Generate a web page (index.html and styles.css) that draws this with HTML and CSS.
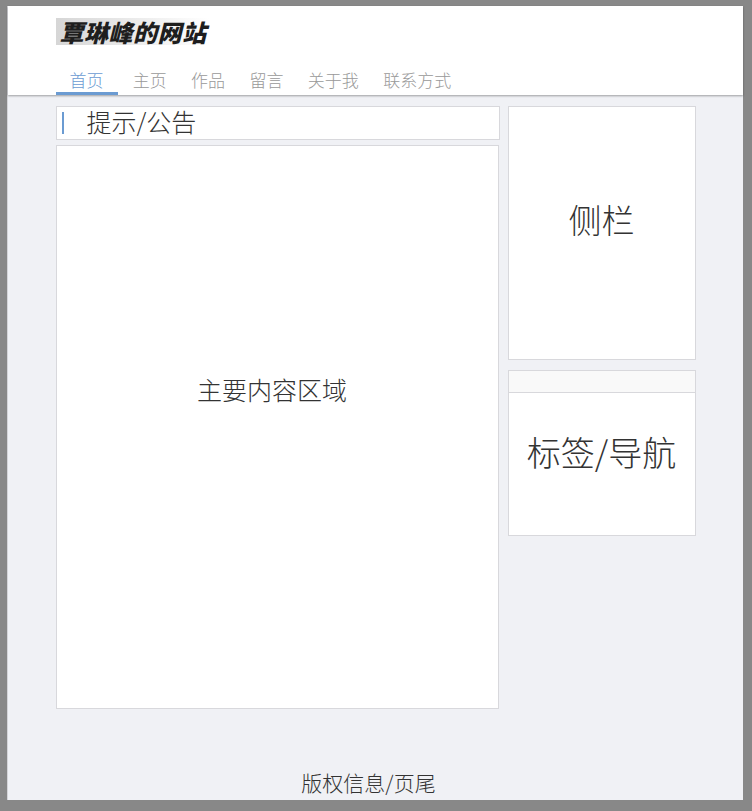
FILE: index.html
```html
<!DOCTYPE html>
<html lang="zh-CN">
<head>
    <meta charset="UTF-8">
    <meta name="viewport" content="width=device-width, initial-scale=1.0">
    <title>覃琳峰的网站</title>
    <link rel="stylesheet" href="styles.css">
</head>
<body>
<div class="page">
    <div class="header">
        <div class="wrap">
            <h1 class="logo">覃琳峰的网站</h1>
            <div class="nav">
                <a href="#" class="active">首页</a>
                <a href="#">主页</a>
                <a href="#">作品</a>
                <a href="#">留言</a>
                <a href="#">关于我</a>
                <a href="#">联系方式</a>
            </div>
        </div>
    </div>
    <div class="wrap content">
        <div class="left">
            <div class="notice">提示/公告</div>
            <div class="main-box">主要内容区域</div>
        </div>
        <div class="right">
            <div class="side-box">侧栏</div>
            <div class="tag-box">
                <div class="tag-head"></div>
                <div class="tag-body">标签/导航</div>
            </div>
        </div>
    </div>
    <div class="footer">版权信息/页尾</div>
</div>
</body>
</html>
```

FILE: styles.css
```css
body {
    margin: 0;
    padding: 6px 9px 11px 7px;
    background-color: #888;
    font-family: "Noto Sans CJK SC", "Noto Sans", sans-serif;
    font-weight: 300;
    color: #333;
}
.page {
    height: 794px;
    background-color: #f0f1f5;
    display: flex;
    flex-direction: column;
    border-left: 1px solid #d4d4d8;
    box-sizing: border-box;
}
.wrap {
    width: 640px;
    margin: 0 auto;
}
.header {
    background-color: #fff;
    padding-top: 12px;
    box-shadow: 0 1px 2px rgba(0, 0, 0, 0.35);
    position: relative;
}
.logo {
    display: block;
    width: fit-content;
    margin: 0;
    padding: 0 2px 0 4px;
    font-size: 24px;
    line-height: 27px;
    letter-spacing: 0.5px;
    font-weight: 900;
    font-style: italic;
    color: #1e1e1e;
    background: linear-gradient(to right, #d6d6d6, #fff);
}
.nav {
    display: flex;
    margin-top: 22px;
}
.nav a {
    display: block;
    padding: 0 12.2px;
    font-size: 17px;
    line-height: 25px;
    color: #999;
    text-decoration: none;
    border-bottom: 3px solid transparent;
}
.nav a.active {
    padding: 0 14px;
    margin-right: 3px;
    color: #6b9bd2;
    border-bottom-color: #6b9bd2;
}
.content {
    display: flex;
    gap: 8px;
    padding-top: 11px;
}
.left {
    width: 444px;
    display: flex;
    flex-direction: column;
    gap: 5px;
}
.notice {
    height: 34px;
    box-sizing: border-box;
    background-color: #fff;
    border: 1px solid #d8d8dc;
    display: flex;
    align-items: center;
    font-size: 25px;
    padding: 0 0 4px 30px;
    position: relative;
}
.notice::before {
    content: "";
    position: absolute;
    left: 5px;
    top: 5px;
    width: 2px;
    height: 22px;
    background-color: #6b9bd2;
}
.main-box {
    width: 443px;
    height: 564px;
    box-sizing: border-box;
    background-color: #fff;
    border: 1px solid #d8d8dc;
    font-size: 25px;
    text-align: center;
    padding: 225px 10px 0 0;
}
.right {
    width: 188px;
    display: flex;
    flex-direction: column;
    gap: 10px;
}
.side-box {
    height: 254px;
    box-sizing: border-box;
    background-color: #fff;
    border: 1px solid #d8d8dc;
    font-size: 33px;
    text-align: center;
    padding-top: 88px;
}
.tag-box {
    height: 166px;
    box-sizing: border-box;
    background-color: #fff;
    border: 1px solid #d8d8dc;
}
.tag-head {
    height: 21px;
    background-color: #f9f9f9;
    border-bottom: 1px solid #d8d8dc;
}
.tag-body {
    font-size: 34px;
    text-align: center;
    padding-top: 34px;
}
.footer {
    margin-top: auto;
    padding: 0 14px 4px 0;
    line-height: 28px;
    font-size: 21px;
    text-align: center;
}
```
